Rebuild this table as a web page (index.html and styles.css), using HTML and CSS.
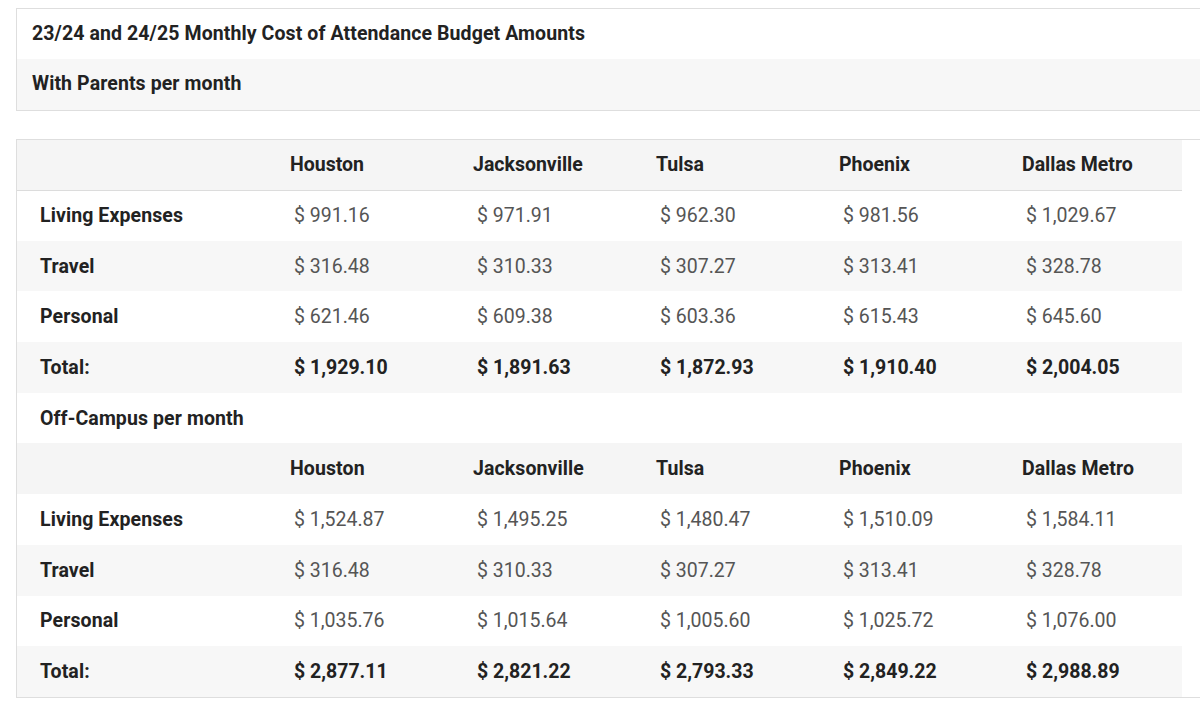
FILE: index.html
```html
<!DOCTYPE html>
<html>
<head>
<meta charset="utf-8">
<link rel="stylesheet" href="styles.css">
</head>
<body>
<div class="page">
  <div class="intro">
    <div class="intro-row title">23/24 and 24/25 Monthly Cost of Attendance Budget Amounts</div>
    <div class="intro-row sub">With Parents per month</div>
  </div>
  <div class="tablebox">
    <table class="budget">
      <colgroup>
        <col class="c-label"><col class="c-city"><col class="c-city"><col class="c-city"><col class="c-city"><col class="c-city">
      </colgroup>
      <thead>
        <tr class="head first-head"><th></th><th>Houston</th><th>Jacksonville</th><th>Tulsa</th><th>Phoenix</th><th>Dallas Metro</th></tr>
      </thead>
      <tbody>
        <tr><th>Living Expenses</th><td>$ 991.16</td><td>$ 971.91</td><td>$ 962.30</td><td>$ 981.56</td><td>$ 1,029.67</td></tr>
        <tr class="alt"><th>Travel</th><td>$ 316.48</td><td>$ 310.33</td><td>$ 307.27</td><td>$ 313.41</td><td>$ 328.78</td></tr>
        <tr><th>Personal</th><td>$ 621.46</td><td>$ 609.38</td><td>$ 603.36</td><td>$ 615.43</td><td>$ 645.60</td></tr>
        <tr class="alt total"><th>Total:</th><td>$ 1,929.10</td><td>$ 1,891.63</td><td>$ 1,872.93</td><td>$ 1,910.40</td><td>$ 2,004.05</td></tr>
        <tr class="section"><th colspan="6">Off-Campus per month</th></tr>
        <tr class="head"><th></th><th>Houston</th><th>Jacksonville</th><th>Tulsa</th><th>Phoenix</th><th>Dallas Metro</th></tr>
        <tr><th>Living Expenses</th><td>$ 1,524.87</td><td>$ 1,495.25</td><td>$ 1,480.47</td><td>$ 1,510.09</td><td>$ 1,584.11</td></tr>
        <tr class="alt"><th>Travel</th><td>$ 316.48</td><td>$ 310.33</td><td>$ 307.27</td><td>$ 313.41</td><td>$ 328.78</td></tr>
        <tr><th>Personal</th><td>$ 1,035.76</td><td>$ 1,015.64</td><td>$ 1,005.60</td><td>$ 1,025.72</td><td>$ 1,076.00</td></tr>
        <tr class="alt total"><th>Total:</th><td>$ 2,877.11</td><td>$ 2,821.22</td><td>$ 2,793.33</td><td>$ 2,849.22</td><td>$ 2,988.89</td></tr>
      </tbody>
    </table>
  </div>
</div>
</body>
</html>
```

FILE: styles.css
```css
html, body {
  margin: 0;
  padding: 0;
  background: #ffffff;
  overflow: hidden;
}
body {
  font-family: Roboto, "Liberation Sans", Arial, sans-serif;
  color: #222;
}
.page {
  width: 1240px;
  padding: 8px 0 0 16px;
}
.intro {
  border: 1px solid #dedede;
  display: flex;
  flex-direction: column;
}
.intro-row {
  height: 50px;
  display: flex;
  align-items: center;
  padding-left: 15px;
  font-size: 19.5px;
  font-weight: 700;
  color: #222;
  letter-spacing: 0.1px;
}
.intro-row.title {
  background: #ffffff;
  padding-bottom: 2px;
  height: 48px;
}
.intro-row.sub {
  background: #f7f7f7;
  height: 51px;
  padding-bottom: 2px;
  box-sizing: border-box;
}
.tablebox {
  margin-top: 28px;
  border: 1px solid #dedede;
}
.budget {
  border-collapse: collapse;
  table-layout: fixed;
  width: 1165px;
}
.c-label { width: 250px; }
.c-city { width: 183px; }
.budget th, .budget td {
  height: 50.7px;
  padding: 0 0 0 23px;
  text-align: left;
  font-size: 19.5px;
  white-space: nowrap;
  box-sizing: border-box;
}
.budget tbody th {
  padding-left: 23px;
  font-weight: 700;
  color: #222;
  letter-spacing: 0.1px;
}
.budget td {
  color: #555;
  font-weight: 400;
  padding-left: 27px;
}
.budget tr.head th {
  font-weight: 700;
  color: #222;
  background: #f5f5f5;
}
.budget tr.first-head th {
  border-bottom: 1px solid #dcdcdc;
  height: 50px;
}
.budget tr.alt th, .budget tr.alt td {
  background: #f7f7f7;
}
.budget tr.total td {
  font-weight: 700;
  color: #222;
}
.budget tr.section th {
  background: #ffffff;
}
```
